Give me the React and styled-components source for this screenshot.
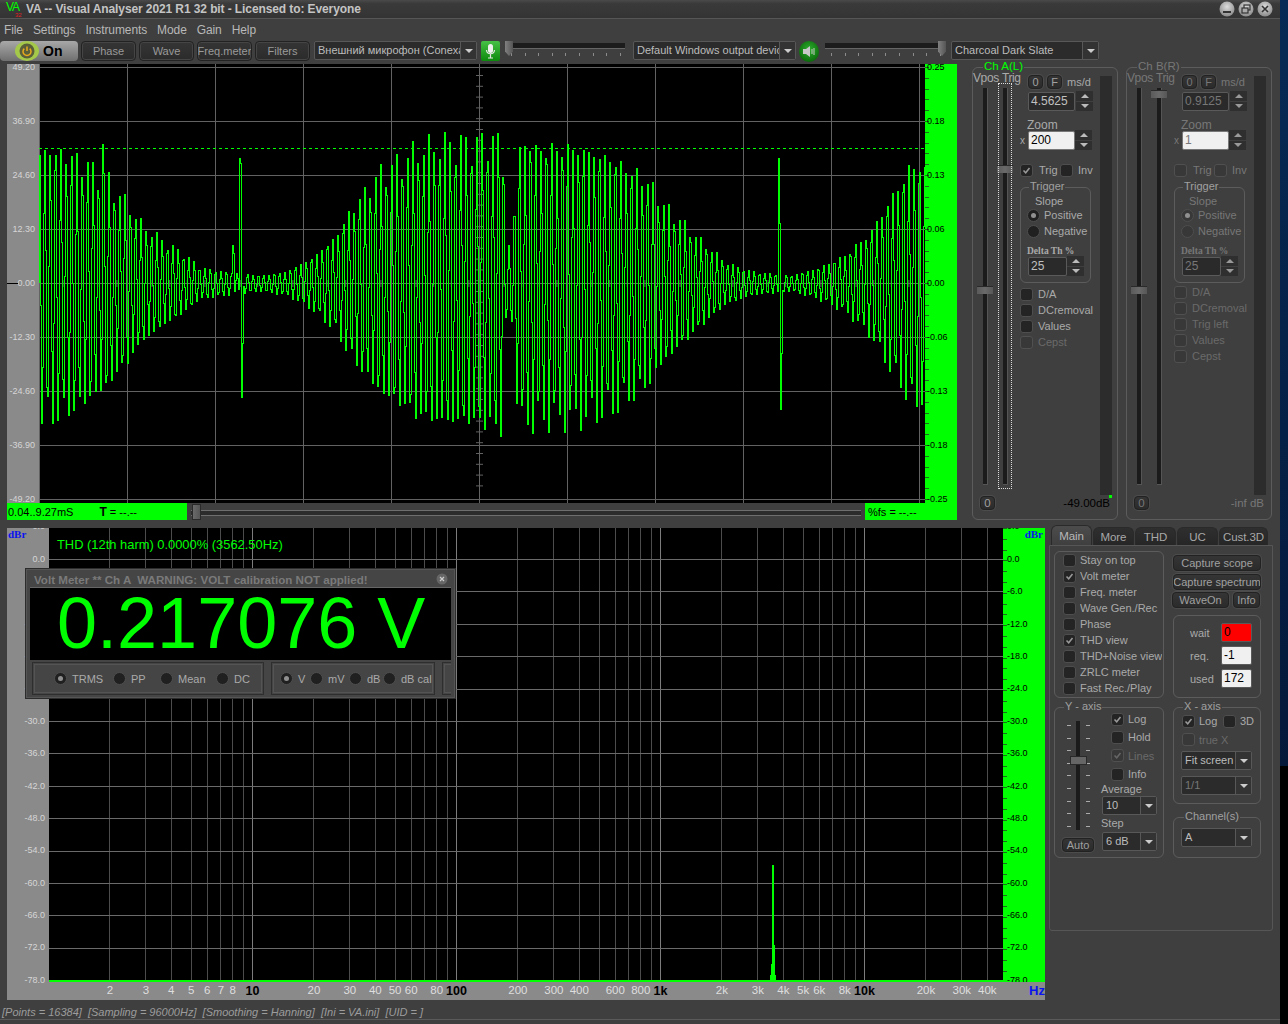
import React from 'react'
import styled, { createGlobalStyle } from 'styled-components'

const GREEN = '#00ff00'
const FONT = '"Liberation Sans", Arial, sans-serif'
const PANEL = '#3f3f3f'

const GlobalStyle = createGlobalStyle`
  html, body {
    margin: 0;
    padding: 0;
    background: #000;
    overflow: hidden;
  }
  * {
    box-sizing: border-box;
  }
`

const Page = styled.div`
  display: flex;
  width: 1288px;
  height: 1024px;
  font-family: ${FONT};
  font-size: 11px;
  color: #aaa;
`

const Desktop = styled.div`
  width: 8px;
  background: linear-gradient(#062a55 0, #04183a 766px, #000 766px);
`

const Window = styled.div`
  display: flex;
  flex-direction: column;
  width: 1280px;
  height: 1024px;
  background: ${PANEL};
`

const TitleBar = styled.div`
  display: flex;
  align-items: center;
  height: 19px;
  padding: 0 6px;
  background: linear-gradient(#4a4a4a, #3a3a3a 20%, #343434);
  border-bottom: 1px solid #565656;
`

const Logo = styled.div`
  position: relative;
  width: 20px;
  height: 19px;
  color: ${GREEN};
  font-size: 12px;
  line-height: 15px;
  letter-spacing: -1px;
  span {
    position: absolute;
    left: 9px;
    top: 11px;
    color: #e02020;
    font-size: 6px;
    line-height: 8px;
    letter-spacing: 0;
  }
`

const AppTitle = styled.div`
  flex: 1;
  color: #c4c4c4;
  font-size: 12px;
  font-weight: bold;
  letter-spacing: -0.1px;
`

const CaptionButtons = styled.div`
  display: flex;
  gap: 3px;
  margin-right: 1px;
`

const MenuBar = styled.div`
  display: flex;
  align-items: center;
  gap: 10px;
  height: 21px;
  padding-left: 4px;
  color: #b8b8b8;
  font-size: 12px;
  letter-spacing: -0.1px;
`

const Toolbar = styled.div`
  display: flex;
  gap: 3px;
  height: 24px;
  padding-top: 1px;
`

const OnButton = styled.div`
  display: flex;
  align-items: center;
  gap: 4px;
  width: 78px;
  height: 20px;
  padding-left: 15px;
  border-radius: 4px;
  background: linear-gradient(#a8a8a8, #6f6f6f);
  color: #000;
  font-size: 14px;
  font-weight: bold;
`

const Btn = styled.div`
  display: flex;
  flex: none;
  align-items: center;
  justify-content: center;
  width: ${p => p.$w}px;
  height: ${p => p.$h || 14}px;
  margin-left: ${p => p.$ml || 0}px;
  border: 1px solid #222;
  border-radius: 4px;
  background: linear-gradient(#353535, #2b2b2b);
  box-shadow: 0 0 0 1px #4c4c4c;
  color: ${p => (p.$off ? '#777' : '#a0a0a0')};
  font-size: ${p => p.$fs || 11}px;
  white-space: nowrap;
  overflow: hidden;
`

const ToolButton = styled(Btn)`
  height: 20px;
  box-shadow: inset 0 0 0 1px #454545;
  font-size: 11px;
  color: #9a9a9a;
`

const Combo = styled.div`
  display: flex;
  flex: none;
  width: ${p => p.$w}px;
  height: 19px;
  margin-left: ${p => p.$ml || 0}px;
  margin-top: ${p => p.$mt || 0}px;
  border: 1px solid #585858;
  border-radius: 2px;
  background: #2b2b2b;
  color: ${p => (p.$off ? '#777' : '#bcbcbc')};
  font-size: 11px;
  line-height: 17px;
`

const ComboText = styled.div`
  flex: 1;
  min-width: 0;
  padding-left: 3px;
  overflow: hidden;
  white-space: nowrap;
`

const ComboArrow = styled.div`
  display: flex;
  flex: none;
  align-items: center;
  justify-content: center;
  width: 16px;
  border-left: 1px solid #585858;
  background: #333;
  &::after {
    content: '';
    border-left: 4px solid transparent;
    border-right: 4px solid transparent;
    border-top: 4px solid #ccc;
  }
`

const ToolSlider = styled.div`
  position: relative;
  flex: none;
  width: ${p => p.$w}px;
  height: 20px;
  margin-left: ${p => p.$ml}px;
  background: repeating-linear-gradient(90deg, #8c8c8c 0 1px, transparent 1px 13.6px) 6px 12px / 100% 3px no-repeat;
  &::before {
    content: '';
    position: absolute;
    left: 0;
    right: 0;
    top: 2px;
    height: 5px;
    background: #1c1c1c;
    border-bottom: 1px solid #666;
  }
`

const SliderKnob = styled.div`
  position: absolute;
  top: 0;
  ${p => (p.$right ? 'right: 0;' : 'left: 0;')}
  width: 8px;
  height: 15px;
  background: linear-gradient(90deg, #808080, #555);
  clip-path: polygon(0 0, 100% 0, 100% 70%, 50% 100%, 0 70%);
`

const Body = styled.div`
  display: flex;
  flex-direction: column;
  padding-left: 7px;
`

const TopRow = styled.div`
  display: flex;
  height: 464px;
`

const ScopeColumn = styled.div`
  display: flex;
  flex-direction: column;
  width: 950px;
`

const ChartRow = styled.div`
  display: flex;
  height: ${p => p.$h}px;
`

const GrayAxis = styled.div`
  position: relative;
  z-index: 1;
  flex: none;
  width: ${p => p.$w}px;
  height: 100%;
  clip-path: inset(0 0 -6px 0);
  background: #8a8a8a;
  color: #d6d6d6;
  text-align: right;
  padding-right: 4px;
  font-size: 9px;
`

const GreenAxis = styled.div`
  position: relative;
  flex: none;
  width: ${p => p.$w}px;
  height: 100%;
  overflow: hidden;
  background:
    repeating-linear-gradient(#1c6a1c 0 1px, transparent 1px 10.8px) 0 ${p => p.$tick}px / 4px 100% no-repeat,
    ${GREEN};
  color: #000;
  padding-left: ${p => p.$pl}px;
  font-size: 9px;
`

const AxisLabel = styled.div`
  height: ${p => p.$h}px;
  line-height: ${p => p.$h}px;
  margin-top: ${p => p.$first || 0}px;
`

const ZeroTick = styled.div`
  position: absolute;
  left: 0;
  top: 219px;
  width: 11px;
  height: 1px;
  background: #000;
`

const Plot = styled.svg`
  display: block;
  flex: none;
  background: #000;
`

const ReadoutRow = styled.div`
  display: flex;
  align-items: center;
  gap: 4px;
  height: 17px;
`

const Readout = styled.div`
  display: flex;
  flex: none;
  align-items: center;
  width: ${p => p.$w}px;
  height: 17px;
  background: ${GREEN};
  color: #000;
  padding-left: ${p => p.$pl}px;
  font-size: 11px;
  white-space: nowrap;
  b {
    margin-left: 26px;
    font-size: 12px;
  }
`

const ScrollTrack = styled.div`
  position: relative;
  flex: 1;
  height: 17px;
  &::before {
    content: '';
    position: absolute;
    left: 0;
    right: 0;
    top: 7px;
    height: 4px;
    border-top: 1px solid #6e6e6e;
    border-bottom: 1px solid #6e6e6e;
    background: #2c2c2c;
  }
`

const ScrollThumb = styled.div`
  position: absolute;
  left: 1px;
  top: 1px;
  width: 9px;
  height: 16px;
  border: 1px solid #2a2a2a;
  background: linear-gradient(90deg, #6a6a6a, #565656);
`

const Channels = styled.div`
  display: flex;
  gap: 8px;
  margin-left: 15px;
  padding-top: 3px;
`

const Group = styled.div`
  position: relative;
  width: ${p => p.$w}px;
  height: ${p => p.$h}px;
  margin-top: ${p => p.$mt || 0}px;
  border: 1px solid #5c5c5c;
  border-radius: 6px;
  padding: ${p => p.$pad || 0};
`

const GroupTitle = styled.div`
  position: absolute;
  left: ${p => p.$left}px;
  top: -8px;
  padding: 0 1px;
  background: ${PANEL};
  color: ${p => p.$color || '#a0a0a0'};
  font-size: ${p => p.$fs || 11}px;
  line-height: 13px;
  white-space: nowrap;
`

const ChannelTop = styled.div`
  display: flex;
  height: 427px;
`

const SliderCol = styled.div`
  position: relative;
  flex: none;
  width: ${p => p.$w}px;
`

const SliderLabel = styled.div`
  height: 20px;
  margin-left: ${p => p.$ml || 0}px;
  padding-top: 3px;
  font-size: 12px;
  white-space: nowrap;
  letter-spacing: -0.4px;
  color: ${p => (p.$off ? '#777' : '#aaa')};
`

const VTrack = styled.div`
  position: relative;
  width: 5px;
  height: ${p => p.$h}px;
  margin: 0 auto;
  background: #1b1b1b;
  border-right: 1px solid #555;
  border-bottom: 1px solid #555;
`

const Thumb = styled.div`
  position: absolute;
  left: -6px;
  top: ${p => p.$at}px;
  width: 16px;
  height: 8px;
  background: linear-gradient(90deg, #5a5a5a, #6a6a6a 50%, #575757);
  border-top: 1px solid #2a2a2a;
`

const FocusBox = styled.div`
  position: absolute;
  left: 0;
  top: 15px;
  width: 14px;
  height: 406px;
  border: 1px dotted #dcdcdc;
`

const Controls = styled.div`
  flex: none;
  width: 88px;
  padding: 7px 0 0 8px;
  color: ${p => (p.$off ? '#777' : '#aaa')};
`

const Row = styled.div`
  display: flex;
  align-items: center;
  gap: ${p => p.$gap ?? 4}px;
  height: ${p => p.$h || 14}px;
  margin-top: ${p => p.$mt || 0}px;
  padding-left: ${p => p.$pl || 0}px;
  font-size: ${p => p.$fs || 11}px;
  white-space: nowrap;
`

const Field = styled.div`
  flex: none;
  width: ${p => p.$w}px;
  height: 19px;
  margin-left: ${p => p.$ml || 0}px;
  padding-left: 2px;
  border: 1px solid ${p => (p.$light ? '#777' : '#5a5a5a')};
  border-radius: 2px;
  background: ${p => p.$bg || '#2a2a2a'};
  color: ${p => p.$color || '#c0c0c0'};
  font-size: 12px;
  line-height: 17px;
`

const Spin = styled.div`
  display: flex;
  flex: none;
  flex-direction: column;
  gap: 1px;
  width: 17px;
  height: 20px;
`

const SpinPart = styled.div`
  display: flex;
  flex: 1;
  align-items: center;
  justify-content: center;
  background: #2f2f2f;
  &::after {
    content: '';
    border-left: 4px solid transparent;
    border-right: 4px solid transparent;
    ${p => (p.$up ? 'border-bottom' : 'border-top')}: 4px solid ${p => (p.$off ? '#999' : '#bbb')};
  }
`

const Small = styled.span`
  font-family: "Liberation Serif", "DejaVu Serif", serif;
  font-size: 9.5px;
  font-weight: bold;
`

const BoxMark = styled.span`
  display: flex;
  flex: none;
  align-items: center;
  justify-content: center;
  width: 13px;
  height: 13px;
  border: 1px solid ${p => (p.$off ? '#505050' : '#4e4e4e')};
  border-radius: 3px;
  background: ${p => (p.$off ? '#383838' : '#242424')};
`

const RoundMark = styled.span`
  display: flex;
  flex: none;
  align-items: center;
  justify-content: center;
  width: 13px;
  height: 13px;
  border: 1px solid #4e4e4e;
  border-radius: 50%;
  background: ${p => (p.$off ? '#383838' : '#202020')};
  &::after {
    content: '';
    display: ${p => (p.$on ? 'block' : 'none')};
    width: 5px;
    height: 5px;
    border-radius: 50%;
    background: #909090;
  }
`

const CheckRow = styled(Row)`
  height: ${p => p.$h || 16}px;
  color: ${p => (p.$off ? '#6a6a6a' : 'inherit')};
`

const ClipLabel = styled.span`
  display: block;
  max-width: ${p => p.$clip || 200}px;
  overflow: hidden;
`

const ChannelFooter = styled.div`
  display: flex;
  align-items: center;
  justify-content: space-between;
  height: 16px;
  padding: 0 7px;
  color: ${p => (p.$off ? '#777' : '#000')};
  font-size: 11.5px;
`

const Meter = styled.div`
  position: relative;
  flex: none;
  width: 12px;
  height: 419px;
  margin-top: 8px;
  background: #2c2c2c;
`

const MeterLevel = styled.div`
  position: absolute;
  right: 0;
  bottom: -3px;
  width: 3px;
  height: 3px;
  background: ${GREEN};
`

const BottomRow = styled.div`
  display: flex;
  height: 472px;
`

const SpectrumColumn = styled.div`
  position: relative;
  width: 1038px;
`

const XStrip = styled.div`
  position: relative;
  height: 18px;
  background: #8a8a8a;
`

const XLabel = styled.span`
  position: absolute;
  top: 2px;
  transform: translateX(-50%);
  color: ${p => (p.$major ? '#000' : '#dedede')};
  font-weight: ${p => (p.$major ? 'bold' : 'normal')};
  font-size: ${p => (p.$major ? 12.5 : 11.5)}px;
`

const BlueUnit = styled.span`
  position: absolute;
  font-family: "Liberation Serif", serif;
  font-weight: bold;
  font-size: 11px;
  color: #0a14f0;
  line-height: 12px;
  ${p => p.$pos}
`

const HzUnit = styled.span`
  position: absolute;
  right: 0;
  top: 1px;
  color: #0a14f0;
  font-weight: bold;
  font-size: 13px;
`

const ThdText = styled.div`
  position: absolute;
  left: 50px;
  top: 10px;
  color: ${GREEN};
  font-size: 12.9px;
  line-height: 14px;
  white-space: nowrap;
`

const VoltMeter = styled.div`
  position: absolute;
  z-index: 2;
  left: 18px;
  top: 40px;
  width: 431px;
  height: 131px;
  border: 1px solid #2c2c2c;
  background: #454545;
  box-shadow: inset 0 0 0 1px #555;
  padding: 0 4px;
`

const VoltTitle = styled.div`
  display: flex;
  align-items: center;
  justify-content: space-between;
  height: 18px;
  padding: 2px 3px 0 4px;
  color: #7a7a7a;
  font-size: 11.6px;
  font-weight: bold;
  white-space: pre;
`

const VoltDisplay = styled.div`
  height: 73px;
  border-top: 1px solid #666;
  background: #000;
  color: ${GREEN};
  font-size: 72px;
  line-height: 71px;
  padding-left: 27px;
  white-space: nowrap;
`

const VoltRadios = styled.div`
  display: flex;
  gap: 7px;
  height: 37px;
  padding: 2px 0 0 2px;
  overflow: hidden;
`

const RadioGroup = styled.div`
  display: flex;
  flex: none;
  align-items: center;
  width: ${p => p.$w}px;
  height: 33px;
  padding-left: ${p => p.$pl}px;
  border: 1px solid #2e2e2e;
  outline: 1px solid #545454;
  outline-offset: -3px;
  font-size: 11px;
`

const RadioItem = styled.div`
  display: flex;
  flex: none;
  align-items: center;
  gap: 5px;
  width: ${p => p.$w}px;
  white-space: nowrap;
`

const SidePanel = styled.div`
  flex: none;
  width: 224px;
  margin-left: 4px;
`

const TabRow = styled.div`
  display: flex;
  align-items: flex-end;
  gap: 1px;
  height: 17px;
  padding-left: 2px;
`

const Tab = styled.div`
  display: flex;
  align-items: center;
  justify-content: center;
  width: ${p => p.$w}px;
  height: ${p => (p.$active ? 20 : 18)}px;
  margin-top: ${p => (p.$active ? -3 : 0)}px;
  border: 1px solid #2a2a2a;
  border-bottom: none;
  border-radius: 6px 6px 0 0;
  background: ${p => (p.$active ? 'linear-gradient(#4c4c4c, #3f3f3f)' : 'linear-gradient(#2f2f2f, #262626)')};
  color: ${p => (p.$active ? '#b8b8b8' : '#a8a8a8')};
  font-size: 11.5px;
  letter-spacing: -0.1px;
`

const TabPanel = styled.div`
  display: flex;
  gap: 9px;
  height: 386px;
  padding: 5px 0 0 4px;
  border: 1px solid #565656;
  border-radius: 0 0 3px 3px;
`

const PanelCol = styled.div`
  display: flex;
  flex: none;
  flex-direction: column;
  width: ${p => p.$w}px;
`

const ButtonStack = styled.div`
  display: flex;
  flex-direction: column;
  gap: 3px;
  height: 64px;
  padding-top: 4px;
`

const ButtonRow = styled.div`
  display: flex;
  gap: 4px;
  margin-left: -1px;
  margin-top: -1px;
`

const WaitRow = styled.div`
  display: flex;
  align-items: center;
  height: 19px;
  margin-bottom: 4px;
  font-size: 11px;
  span {
    width: 31px;
  }
`

const AxisSlider = styled.div`
  display: flex;
  flex: none;
  flex-direction: column;
  width: 39px;
  padding: 13px 0 0 7px;
`

const TickedTrack = styled.div`
  position: relative;
  width: 32px;
  height: 109px;
  margin-bottom: 8px;
  background:
    repeating-linear-gradient(#aaa 0 1px, transparent 1px 12.6px) 5px 4px / 4px 100% no-repeat,
    repeating-linear-gradient(#aaa 0 1px, transparent 1px 12.6px) 24px 4px / 4px 100% no-repeat;
`

const AxisTrack = styled.div`
  position: absolute;
  left: 14px;
  top: 0;
  width: 4px;
  height: 109px;
  background: #1b1b1b;
`

const AxisThumb = styled.div`
  position: absolute;
  left: -6px;
  top: 35px;
  width: 17px;
  height: 9px;
  border: 1px solid #2a2a2a;
  background: #666;
`

const AxisOptions = styled.div`
  flex: none;
  width: 64px;
  margin-left: 7px;
  padding-top: 2px;
`

const OptionCheck = styled(CheckRow)`
  height: 18.3px;
  padding-left: 10px;
`

const AxisLabelText = styled.div`
  height: ${p => p.$h}px;
  line-height: ${p => p.$h}px;
  font-size: 11px;
`

const FlexRow = styled.div`
  display: flex;
`

const InlineLabel = styled.span`
  width: ${p => p.$w}px;
  margin-left: ${p => p.$ml || 0}px;
  font-size: ${p => p.$fs || 11}px;
`

const StatusBar = styled.div`
  display: flex;
  align-items: center;
  height: 20px;
  padding: 4px 0 0 2px;
  color: #9c9c9c;
  font-size: 11px;
  font-style: italic;
  white-space: pre;
  border-bottom: 1px solid #5a5a5a;
`

const Check = ({ on, off }) => (
  <BoxMark $off={off}>
    {on && (
      <svg width="11" height="11" viewBox="0 0 11 11">
        <path d="M2.5 5.5 L4.7 7.8 L8.5 3" fill="none" stroke={off ? '#666' : '#9a9a9a'} strokeWidth="1.5" />
      </svg>
    )}
  </BoxMark>
)

const Spinner = ({ off }) => (
  <Spin>
    <SpinPart $up $off={off} />
    <SpinPart $off={off} />
  </Spin>
)

const CaptionButton = ({ children }) => (
  <svg width="16" height="16" viewBox="0 0 16 16">
    <defs>
      <radialGradient id="capGrad" cx="50%" cy="35%" r="65%">
        <stop offset="0%" stopColor="#dcdcdc" />
        <stop offset="100%" stopColor="#8a8a8a" />
      </radialGradient>
    </defs>
    <circle cx="8" cy="8" r="7.5" fill="url(#capGrad)" />
    {children}
  </svg>
)

const PowerIcon = () => (
  <svg width="24" height="20" viewBox="0 0 24 20">
    <ellipse cx="12" cy="10" rx="12" ry="10" fill="#a4c84a" />
    <circle cx="12" cy="10" r="7.5" fill="#5a5f3a" />
    <path d="M9.3 7.6 A4 4 0 1 0 14.7 7.6" fill="none" stroke="#e8a91c" strokeWidth="1.5" />
    <path d="M12 5.5 V10" stroke="#e8a91c" strokeWidth="1.5" />
  </svg>
)

const MicIcon = () => (
  <svg width="19" height="20" viewBox="0 0 19 20" style={{ flex: 'none', marginLeft: 1 }}>
    <defs>
      <linearGradient id="micGrad" x1="0" y1="0" x2="0" y2="1">
        <stop offset="0%" stopColor="#46c046" />
        <stop offset="100%" stopColor="#0c8a0c" />
      </linearGradient>
    </defs>
    <rect width="19" height="20" rx="2" fill="url(#micGrad)" />
    <rect x="7" y="3" width="5" height="9" rx="2.5" fill="#eee" />
    <path d="M5.5 9 C6 14 13 14 13.5 9 M9.5 13 V17 M7 17 H12" fill="none" stroke="#e4e4e4" strokeWidth="1.2" />
  </svg>
)

const SpeakerIcon = () => (
  <svg width="20" height="21" viewBox="0 0 20 21" style={{ flex: 'none' }}>
    <defs>
      <radialGradient id="spkGrad" cx="50%" cy="40%" r="60%">
        <stop offset="0%" stopColor="#2fae2f" />
        <stop offset="100%" stopColor="#0a6a0a" />
      </radialGradient>
    </defs>
    <ellipse cx="10" cy="10.5" rx="10" ry="10.5" fill="url(#spkGrad)" />
    <path d="M4 8 H7 L11 5 V16 L7 13 H4 Z" fill="#c8c8c8" />
    <path d="M13 8 L13 13 M15 7 L15 14" stroke="#c8c8c8" strokeWidth="1" />
  </svg>
)

// envelope of the scope trace, [x in page px, amplitude in px]
const ENVELOPE = [
  [39, 145], [60, 140], [75, 133], [90, 123], [108, 110], [118, 93], [127, 85], [140, 63], [150, 55],
  [165, 43], [180, 33], [200, 16], [225, 12], [260, 8], [285, 12], [310, 26], [335, 50], [350, 78],
  [380, 118], [400, 130], [417, 143], [443, 149], [467, 149], [502, 155], [505, 40], [511, 40], [518, 151],
  [543, 146], [577, 145], [610, 135], [630, 121], [647, 108], [663, 83], [683, 63], [697, 48], [725, 22],
  [750, 12], [790, 8], [815, 15], [845, 30], [870, 55], [895, 100], [915, 133], [925, 115],
]

const envelopeAt = x => {
  for (let i = 1; i < ENVELOPE.length; i++) {
    const [x0, a0] = ENVELOPE[i - 1]
    const [x1, a1] = ENVELOPE[i]
    if (x <= x1) return a0 + ((a1 - a0) * (x - x0)) / (x1 - x0)
  }
  return 0
}

const SPIKES = { 102: 139, 232: 38, 233: 30, 239: 125, 240: 120, 241: -114, 242: -60, 778: 125, 779: 60, 780: -126, 781: -70 }

// one sample per pixel, drawn as steps so every sample is a vertical bar
const buildTrace = () => {
  const points = []
  let last = 219
  for (let x = 39; x < 925; x++) {
    const a = envelopeAt(x) * (0.97 + 0.06 * Math.sin(x * 0.37))
    const s = Math.sin((2 * Math.PI * x * 3) / 16 + 0.15 * Math.sin(x / 23))
    const v = SPIKES[x] !== undefined ? SPIKES[x] : a * s
    const y = Math.round(219 - v)
    const px = x - 39 + 0.5
    points.push(`${px},${last} ${px},${y}`)
    last = y
  }
  return points.join(' ')
}

const range = (n, fn) => Array.from({ length: n }, (_, i) => fn(i))

const ScopePlot = () => (
  <Plot width="886" height="439">
    <g stroke="#626262" strokeWidth="1">
      {range(11, i => <line key={i} x1={88 * i + 0.5} x2={88 * i + 0.5} y1="0" y2="439" />)}
      {range(9, i => <line key={i} x1="0" x2="886" y1={3.5 + 54 * i} y2={3.5 + 54 * i} />)}
      {range(39, i => <line key={i} x1="437" x2="444" y1={11.5 + 10.8 * i} y2={11.5 + 10.8 * i} />)}
      {range(50, i => <line key={i} x1={7.5 + 17.6 * i} x2={7.5 + 17.6 * i} y1="216" y2="223" />)}
    </g>
    <polyline points={buildTrace()} fill="none" stroke={GREEN} strokeWidth="1" shapeRendering="crispEdges" />
    <line x1="0" x2="886" y1="84.5" y2="84.5" stroke={GREEN} strokeDasharray="3 3" />
  </Plot>
)

const freqX = f => 48 + 204 * Math.log10(f)

const LOG_LINES = []
for (const dec of [1, 10, 100, 1000, 10000]) {
  for (let m = 1; m < 10; m++) {
    if (dec * m <= 40000 && dec * m !== 1) LOG_LINES.push(dec * m)
  }
}

const SpectrumPlot = () => (
  <Plot width="954" height="454">
    {LOG_LINES.map(f => {
      const x = Math.round(freqX(f)) - 49 + 0.5
      const major = String(f).startsWith('1')
      return <line key={f} x1={x} x2={x} y1="0" y2="454" stroke={major ? '#7c7c7c' : '#4c4c4c'} />
    })}
    {range(14, i => (
      <line key={i} x1="0" x2="954" y1={Math.round(31 + 32.4 * i) + 0.5} y2={Math.round(31 + 32.4 * i) + 0.5} stroke="#6a6a6a" />
    ))}
    <g fill={GREEN} shapeRendering="crispEdges">
      <rect x="723" y="337" width="2" height="117" />
      <rect x="725" y="417" width="1" height="37" />
      <rect x="722" y="436" width="1" height="18" />
      <rect x="721" y="447" width="6" height="7" />
      <rect x="0" y="452" width="954" height="2" />
    </g>
  </Plot>
)

const SCOPE_LEFT = ['49.20', '36.90', '24.60', '12.30', '0.00', '-12.30', '-24.60', '-36.90', '-49.20']
const SCOPE_RIGHT = ['0.25', '0.18', '0.13', '0.06', '0.00', '-0.06', '-0.13', '-0.18', '-0.25']
const SPECTRUM_DB = ['0.0', '0.0', '-6.0', '-12.0', '-18.0', '-24.0', '-30.0', '-36.0', '-42.0', '-48.0', '-54.0', '-60.0', '-66.0', '-72.0', '-78.0']

const AxisLabels = ({ items, h, first }) =>
  items.map((t, i) => (
    <AxisLabel key={i} $h={h} $first={i === 0 ? first : 0}>
      {t}
    </AxisLabel>
  ))

const X_LABELS = [
  [2, '2'], [3, '3'], [4, '4'], [5, '5'], [6, '6'], [7, '7'], [8, '8'], [10, '10', true],
  [20, '20'], [30, '30'], [40, '40'], [50, '50'], [60, '60'], [80, '80'], [100, '100', true],
  [200, '200'], [300, '300'], [400, '400'], [600, '600'], [800, '800'], [1000, '1k', true],
  [2000, '2k'], [3000, '3k'], [4000, '4k'], [5000, '5k'], [6000, '6k'], [8000, '8k'], [10000, '10k', true],
  [20000, '20k'], [30000, '30k'], [40000, '40k'],
]

const Channel = ({ name, off, trig, ms, zoom, level, hasTrigLeft, focus, color }) => {
  const checks = hasTrigLeft
    ? ['D/A', 'DCremoval', 'Trig left', 'Values', 'Cepst']
    : ['D/A', 'DCremoval', 'Values', 'Cepst']
  return (
    <Group $w={146} $h={453}>
      <GroupTitle $left={10} $color={color} $fs={11.5}>{name}</GroupTitle>
      <ChannelTop>
        <SliderCol $w={25}>
          <SliderLabel $off={off}>Vpos</SliderLabel>
          <VTrack $h={397}><Thumb $at={198} /></VTrack>
        </SliderCol>
        <SliderCol $w={14}>
          <SliderLabel $off={off} $ml={4}>Trig</SliderLabel>
          <VTrack $h={397}><Thumb $at={trig} /></VTrack>
          {focus && <FocusBox />}
        </SliderCol>
        <Controls $off={off}>
          <Row $pl={8} $gap={4}>
            <Btn $w={15} $off={off}>0</Btn>
            <Btn $w={15} $off={off}>F</Btn>
            <InlineLabel $ml={1}>ms/d</InlineLabel>
          </Row>
          <Row $pl={8} $h={20} $mt={2} $gap={1}>
            <Field $w={47} $color={off ? '#777' : undefined}>{ms}</Field>
            <Spinner off={off} />
          </Row>
          <Row $pl={7} $mt={8} $h={11} $fs={12}>Zoom</Row>
          <Row $h={20} $gap={0}>
            <InlineLabel $w={8} $fs={10}>x</InlineLabel>
            <Field $w={47} $light $bg="#f0f0f0" $color={off ? '#777' : '#000'}>{zoom}</Field>
            <Spinner off={off} />
          </Row>
          <Row $mt={13} $gap={5}>
            <Check on={!off} off={off} />
            <InlineLabel $w={16} $ml={1}>Trig</InlineLabel>
            <Check off={off} />
            <span>Inv</span>
          </Row>
          <Group $w={71} $h={96} $mt={10} $pad="7px 0 0 0">
            <GroupTitle $left={8}>Trigger</GroupTitle>
            <Row $pl={14} $h={12}>Slope</Row>
            <CheckRow $pl={6} $gap={4}>
              <RoundMark $on $off={off} />
              Positive
            </CheckRow>
            <CheckRow $pl={6} $gap={4}>
              <RoundMark $off={off} />
              Negative
            </CheckRow>
            <Row $pl={6} $h={11} $mt={6}><Small>Delta Th %</Small></Row>
            <Row $pl={7} $h={20} $gap={0}>
              <Field $w={39} $color={off ? '#777' : undefined}>25</Field>
              <Spinner off={off} />
            </Row>
          </Group>
          <Row $h={off ? 1 : 3} />
          {checks.map(c => {
            const dim = off || c === 'Cepst'
            return (
              <CheckRow key={c} $off={dim} $gap={5}>
                <Check off={dim} />
                {c}
              </CheckRow>
            )
          })}
        </Controls>
        <Meter>{level && <MeterLevel />}</Meter>
      </ChannelTop>
      <ChannelFooter $off={off}>
        <Btn $w={15} $off={off} $fs={11.5}>0</Btn>
        <span>{level ? '-49.00dB' : '-inf dB'}</span>
      </ChannelFooter>
    </Group>
  )
}

const MAIN_OPTIONS = [
  ['Stay on top'], ['Volt meter', true], ['Freq. meter'], ['Wave Gen./Rec.', false, 78], ['Phase'],
  ['THD view', true], ['THD+Noise view'], ['ZRLC meter'], ['Fast Rec./Play'],
]

export default function App() {
  return (
    <Page>
      <GlobalStyle />
      <Window>
        <TitleBar>
          <Logo>VA<span>32</span></Logo>
          <AppTitle>VA -- Visual Analyser 2021 R1 32 bit - Licensed to: Everyone</AppTitle>
          <CaptionButtons>
            <CaptionButton><rect x="4" y="10" width="8" height="2" fill="#333" /></CaptionButton>
            <CaptionButton>
              <rect x="6" y="4" width="6" height="5" fill="none" stroke="#333" strokeWidth="1.2" />
              <rect x="4" y="7" width="6" height="5" fill="#aaa" stroke="#333" strokeWidth="1.2" />
            </CaptionButton>
            <CaptionButton><path d="M5 5 L11 11 M11 5 L5 11" stroke="#333" strokeWidth="1.6" /></CaptionButton>
          </CaptionButtons>
        </TitleBar>
        <MenuBar>
          <span>File</span>
          <span>Settings</span>
          <span>Instruments</span>
          <span>Mode</span>
          <span>Gain</span>
          <span>Help</span>
        </MenuBar>
        <Toolbar>
          <OnButton><PowerIcon />On</OnButton>
          <ToolButton $w={55}>Phase</ToolButton>
          <ToolButton $w={55}>Wave</ToolButton>
          <ToolButton $w={55}>Freq.meter</ToolButton>
          <ToolButton $w={55}>Filters</ToolButton>
          <Combo $w={163} $ml={1}>
            <ComboText>Внешний микрофон (Conexa</ComboText>
            <ComboArrow />
          </Combo>
          <MicIcon />
          <ToolSlider $w={120} $ml={2}><SliderKnob /></ToolSlider>
          <Combo $w={163} $ml={5}>
            <ComboText>Default Windows output devic</ComboText>
            <ComboArrow />
          </Combo>
          <SpeakerIcon />
          <ToolSlider $w={121} $ml={3}><SliderKnob $right /></ToolSlider>
          <Combo $w={148} $ml={2}>
            <ComboText>Charcoal Dark Slate</ComboText>
            <ComboArrow />
          </Combo>
        </Toolbar>
        <Body>
          <TopRow>
            <ScopeColumn>
              <ChartRow $h={439}>
                <GrayAxis $w={32}>
                  <ZeroTick />
                  <AxisLabels items={SCOPE_LEFT} h={54} first={-24} />
                </GrayAxis>
                <ScopePlot />
                <GreenAxis $w={32} $tick={3} $pl={2}>
                  <AxisLabels items={SCOPE_RIGHT} h={54} first={-24} />
                </GreenAxis>
              </ChartRow>
              <ReadoutRow>
                <Readout $w={180} $pl={1}>0.04..9.27mS<b>T</b>&nbsp;= --.--</Readout>
                <ScrollTrack><ScrollThumb /></ScrollTrack>
                <Readout $w={92} $pl={3}>%fs = --.--</Readout>
              </ReadoutRow>
            </ScopeColumn>
            <Channels>
              <Channel name="Ch A(L)" color={GREEN} trig={77} ms="4.5625" zoom="200" level focus />
              <Channel name="Ch B(R)" color="#777" off trig={2} ms="0.9125" zoom="1" hasTrigLeft />
            </Channels>
          </TopRow>
          <BottomRow>
            <SpectrumColumn>
              <ChartRow $h={454}>
                <GrayAxis $w={42}>
                  <BlueUnit $pos="left: 1px; top: 0;">dBr</BlueUnit>
                  <AxisLabels items={SPECTRUM_DB} h={32.4} first={-17.6} />
                </GrayAxis>
                <SpectrumPlot />
                <GreenAxis $w={42} $tick={0} $pl={4}>
                  <BlueUnit $pos="right: 2px; top: 0;">dBr</BlueUnit>
                  <AxisLabels items={SPECTRUM_DB} h={32.4} first={-17.6} />
                </GreenAxis>
              </ChartRow>
              <XStrip>
                {X_LABELS.map(([f, text, major]) => (
                  <XLabel key={f} $major={major} style={{ left: freqX(f) - 6.5 }}>{text}</XLabel>
                ))}
                <HzUnit>Hz</HzUnit>
              </XStrip>
              <ThdText>THD (12th harm) 0.0000% (3562.50Hz)</ThdText>
              <VoltMeter>
                <VoltTitle>
                  <span>Volt Meter ** Ch A  WARNING: VOLT calibration NOT applied!</span>
                  <svg width="12" height="12" viewBox="0 0 12 12">
                    <circle cx="6" cy="6" r="5.5" fill="#666" />
                    <path d="M4 4 L8 8 M8 4 L4 8" stroke="#ccc" strokeWidth="1.2" />
                  </svg>
                </VoltTitle>
                <VoltDisplay>0.217076 V</VoltDisplay>
                <VoltRadios>
                  <RadioGroup $w={232} $pl={21}>
                    <RadioItem $w={59}><RoundMark $on />TRMS</RadioItem>
                    <RadioItem $w={47}><RoundMark />PP</RadioItem>
                    <RadioItem $w={56}><RoundMark />Mean</RadioItem>
                    <RadioItem $w={40}><RoundMark />DC</RadioItem>
                  </RadioGroup>
                  <RadioGroup $w={164} $pl={8}>
                    <RadioItem $w={30}><RoundMark $on />V</RadioItem>
                    <RadioItem $w={39}><RoundMark />mV</RadioItem>
                    <RadioItem $w={34}><RoundMark />dB</RadioItem>
                    <RadioItem $w={50}><RoundMark />dB cal</RadioItem>
                  </RadioGroup>
                  <RadioGroup $w={60} $pl={8} />
                </VoltRadios>
              </VoltMeter>
            </SpectrumColumn>
            <SidePanel>
              <TabRow>
                <Tab $w={41} $active>Main</Tab>
                <Tab $w={41}>More</Tab>
                <Tab $w={41}>THD</Tab>
                <Tab $w={41}>UC</Tab>
                <Tab $w={49}>Cust.3D</Tab>
              </TabRow>
              <TabPanel>
                <PanelCol $w={110}>
                  <Group $w={110} $h={147} $pad="0 0 0 8px">
                    {MAIN_OPTIONS.map(([label, on, clip]) => (
                      <CheckRow key={label}>
                        <Check on={on} />
                        <ClipLabel $clip={clip}>{label}</ClipLabel>
                      </CheckRow>
                    ))}
                  </Group>
                  <Group $w={110} $h={151} $mt={9}>
                    <GroupTitle $left={9}>Y - axis</GroupTitle>
                    <FlexRow>
                      <AxisSlider>
                        <TickedTrack>
                          <AxisTrack><AxisThumb /></AxisTrack>
                        </TickedTrack>
                        <Btn $w={32}>Auto</Btn>
                      </AxisSlider>
                      <AxisOptions>
                        <OptionCheck><Check on />Log</OptionCheck>
                        <OptionCheck><Check />Hold</OptionCheck>
                        <OptionCheck $off><Check on off />Lines</OptionCheck>
                        <OptionCheck><Check />Info</OptionCheck>
                        <AxisLabelText $h={13}>Average</AxisLabelText>
                        <Combo $w={55} $ml={1}>
                          <ComboText>10</ComboText>
                          <ComboArrow />
                        </Combo>
                        <AxisLabelText $h={17}>Step</AxisLabelText>
                        <Combo $w={55} $ml={1}>
                          <ComboText>6 dB</ComboText>
                          <ComboArrow />
                        </Combo>
                      </AxisOptions>
                    </FlexRow>
                  </Group>
                </PanelCol>
                <PanelCol $w={88}>
                  <ButtonStack>
                    <Btn $w={88} $h={16}>Capture scope</Btn>
                    <Btn $w={88} $h={16}>Capture spectrum</Btn>
                    <ButtonRow>
                      <Btn $w={57} $h={16}>WaveOn</Btn>
                      <Btn $w={27} $h={16}>Info</Btn>
                    </ButtonRow>
                  </ButtonStack>
                  <Group $w={88} $h={83} $pad="7px 0 0 16px">
                    <WaitRow>
                      <span>wait</span>
                      <Field $w={31} $bg="#ff0000" $color="#000">0</Field>
                    </WaitRow>
                    <WaitRow>
                      <span>req.</span>
                      <Field $w={31} $bg="#f0f0f0" $color="#000">-1</Field>
                    </WaitRow>
                    <WaitRow>
                      <span>used</span>
                      <Field $w={31} $bg="#f0f0f0" $color="#000">172</Field>
                    </WaitRow>
                  </Group>
                  <Group $w={88} $h={97} $mt={9} $pad="4px 0 0 8px">
                    <GroupTitle $left={9}>X - axis</GroupTitle>
                    <CheckRow $h={18}>
                      <Check on />
                      <InlineLabel $w={20}>Log</InlineLabel>
                      <Check />
                      3D
                    </CheckRow>
                    <CheckRow $h={19} $off>
                      <Check off />
                      true X
                    </CheckRow>
                    <Combo $w={71} $ml={-1} $mt={2}>
                      <ComboText>Fit screen</ComboText>
                      <ComboArrow />
                    </Combo>
                    <Combo $w={71} $ml={-1} $mt={6} $off>
                      <ComboText>1/1</ComboText>
                      <ComboArrow />
                    </Combo>
                  </Group>
                  <Group $w={88} $h={41} $mt={13} $pad="10px 0 0 7px">
                    <GroupTitle $left={10}>Channel(s)</GroupTitle>
                    <Combo $w={71}>
                      <ComboText>A</ComboText>
                      <ComboArrow />
                    </Combo>
                  </Group>
                </PanelCol>
              </TabPanel>
            </SidePanel>
          </BottomRow>
        </Body>
        <StatusBar>[Points = 16384]  [Sampling = 96000Hz]  [Smoothing = Hanning]  [Ini = VA.ini]  [UID = ]</StatusBar>
      </Window>
      <Desktop />
    </Page>
  )
}
